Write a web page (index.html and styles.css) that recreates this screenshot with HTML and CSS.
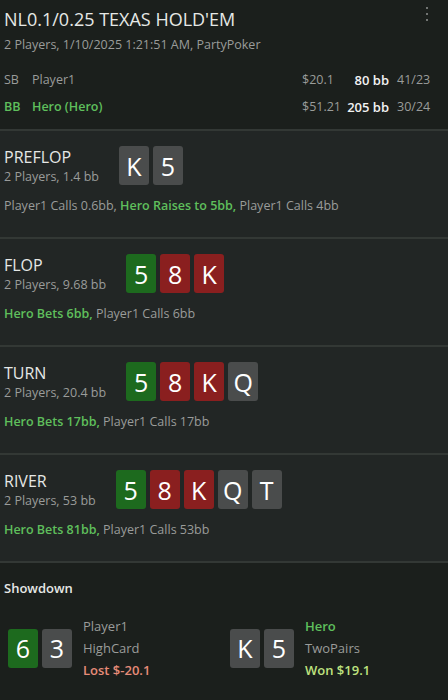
FILE: index.html
```html
<!DOCTYPE html>
<html lang="en">
<head>
    <meta charset="UTF-8">
    <meta name="viewport" content="width=device-width, initial-scale=1.0">
    <title>Hand Replay</title>
    <link rel="stylesheet" href="styles.css">
</head>
<body>
    <div class="head">
        <div class="title-row">
            <div class="title">NL0.1/0.25 TEXAS HOLD'EM</div>
            <div class="kebab"><span></span><span></span><span></span></div>
        </div>
        <div class="sub">2 Players, 1/10/2025 1:21:51 AM, PartyPoker</div>
        <div class="players">
            <div class="pos">SB</div>
            <div class="name">Player1</div>
            <div class="money">$20.1</div>
            <div class="bb">80 bb</div>
            <div class="ratio">41/23</div>

            <div class="pos hero">BB</div>
            <div class="name hero">Hero (Hero)</div>
            <div class="money">$51.21</div>
            <div class="bb">205 bb</div>
            <div class="ratio">30/24</div>
        </div>
    </div>

    <div class="street">
        <div class="street-top">
            <div class="label">
                <div class="street-name">PREFLOP</div>
                <div class="street-info">2 Players, 1.4 bb</div>
            </div>
            <div class="cards">
                <div class="card gray">K</div>
                <div class="card gray">5</div>
            </div>
        </div>
        <div class="actions">Player1 Calls 0.6bb, <b class="hero">Hero Raises to 5bb,</b> Player1 Calls 4bb</div>
    </div>

    <div class="street">
        <div class="street-top">
            <div class="label">
                <div class="street-name">FLOP</div>
                <div class="street-info">2 Players, 9.68 bb</div>
            </div>
            <div class="cards">
                <div class="card green">5</div>
                <div class="card red">8</div>
                <div class="card red">K</div>
            </div>
        </div>
        <div class="actions"><b class="hero">Hero Bets 6bb,</b> Player1 Calls 6bb</div>
    </div>

    <div class="street">
        <div class="street-top">
            <div class="label">
                <div class="street-name">TURN</div>
                <div class="street-info">2 Players, 20.4 bb</div>
            </div>
            <div class="cards">
                <div class="card green">5</div>
                <div class="card red">8</div>
                <div class="card red">K</div>
                <div class="card gray">Q</div>
            </div>
        </div>
        <div class="actions"><b class="hero">Hero Bets 17bb,</b> Player1 Calls 17bb</div>
    </div>

    <div class="street">
        <div class="street-top">
            <div class="label">
                <div class="street-name">RIVER</div>
                <div class="street-info">2 Players, 53 bb</div>
            </div>
            <div class="cards">
                <div class="card green">5</div>
                <div class="card red">8</div>
                <div class="card red">K</div>
                <div class="card gray">Q</div>
                <div class="card gray">T</div>
            </div>
        </div>
        <div class="actions"><b class="hero">Hero Bets 81bb,</b> Player1 Calls 53bb</div>
    </div>

    <div class="showdown">
        <div class="showdown-title">Showdown</div>
        <div class="results">
            <div class="result">
                <div class="cards">
                    <div class="card green">6</div>
                    <div class="card gray">3</div>
                </div>
                <div class="result-info">
                    <div>Player1</div>
                    <div>HighCard</div>
                    <div class="lost">Lost $-20.1</div>
                </div>
            </div>
            <div class="result">
                <div class="cards">
                    <div class="card gray">K</div>
                    <div class="card gray">5</div>
                </div>
                <div class="result-info">
                    <div class="hero bold">Hero</div>
                    <div>TwoPairs</div>
                    <div class="won">Won $19.1</div>
                </div>
            </div>
        </div>
    </div>
</body>
</html>
```

FILE: styles.css
```css
body {
    font-family: 'Open Sans', 'Noto Sans', sans-serif;
    background-color: #1b1f1c;
    color: #9a9c9a;
    margin: 0;
    font-size: 12.5px;
}
.hero {
    color: #5fbf5c;
}
b {
    font-weight: 600;
}
.bold {
    font-weight: 600;
}

/* header */
.head {
    padding: 6px 4px 13px 4px;
    border-bottom: 2px solid #333835;
}
.title-row {
    display: flex;
    justify-content: space-between;
}
.title {
    font-size: 18px;
    line-height: 26px;
    color: #e6e8e6;
}
.kebab {
    display: flex;
    flex-direction: column;
    gap: 4px;
    padding: 1px 16px 0 0;
}
.kebab span {
    width: 2px;
    height: 2px;
    border-radius: 50%;
    background-color: #8f928f;
}
.sub {
    margin-top: 4px;
    line-height: 18px;
}
.players {
    display: grid;
    grid-template-columns: 28px 1fr 44px 43px 55px;
    row-gap: 9px;
    margin-top: 17px;
    line-height: 18px;
}
.players .hero {
    font-weight: 600;
}
.players .bb {
    text-align: right;
    color: #f2f2f2;
    font-weight: 600;
    font-size: 13px;
}
.players .ratio {
    padding-left: 8px;
}

/* streets */
.street {
    background-color: #222625;
    padding: 15px 4px 22px 4px;
    border-bottom: 2px solid #333835;
}
.street-top {
    display: flex;
    gap: 20px;
}
.street-name {
    font-size: 16px;
    line-height: 22px;
    color: #e6e8e6;
}
.street-info {
    line-height: 17px;
}
.cards {
    display: flex;
    gap: 4px;
}
.card {
    width: 30px;
    height: 39px;
    border-radius: 3px;
    color: #ffffff;
    font-size: 25px;
    display: flex;
    align-items: center;
    justify-content: center;
}
.gray {
    background-color: #4a4c4c;
}
.green {
    background-color: #1d6a1e;
}
.red {
    background-color: #8a1f1f;
}
.actions {
    margin-top: 12px;
    line-height: 18px;
}

/* showdown */
.showdown {
    padding: 16px 0 0 4px;
}
.showdown-title {
    font-weight: 600;
    font-size: 13px;
    color: #e6e8e6;
    line-height: 18px;
}
.results {
    display: grid;
    grid-template-columns: 222px 1fr;
    margin-top: 18px;
    padding-left: 4px;
}
.result {
    display: flex;
    align-items: center;
    gap: 11px;
}
.result-info {
    line-height: 22px;
    font-size: 13px;
}
.lost {
    color: #e68b78;
    font-weight: 600;
}
.won {
    color: #bfe27f;
    font-weight: 600;
}
```
